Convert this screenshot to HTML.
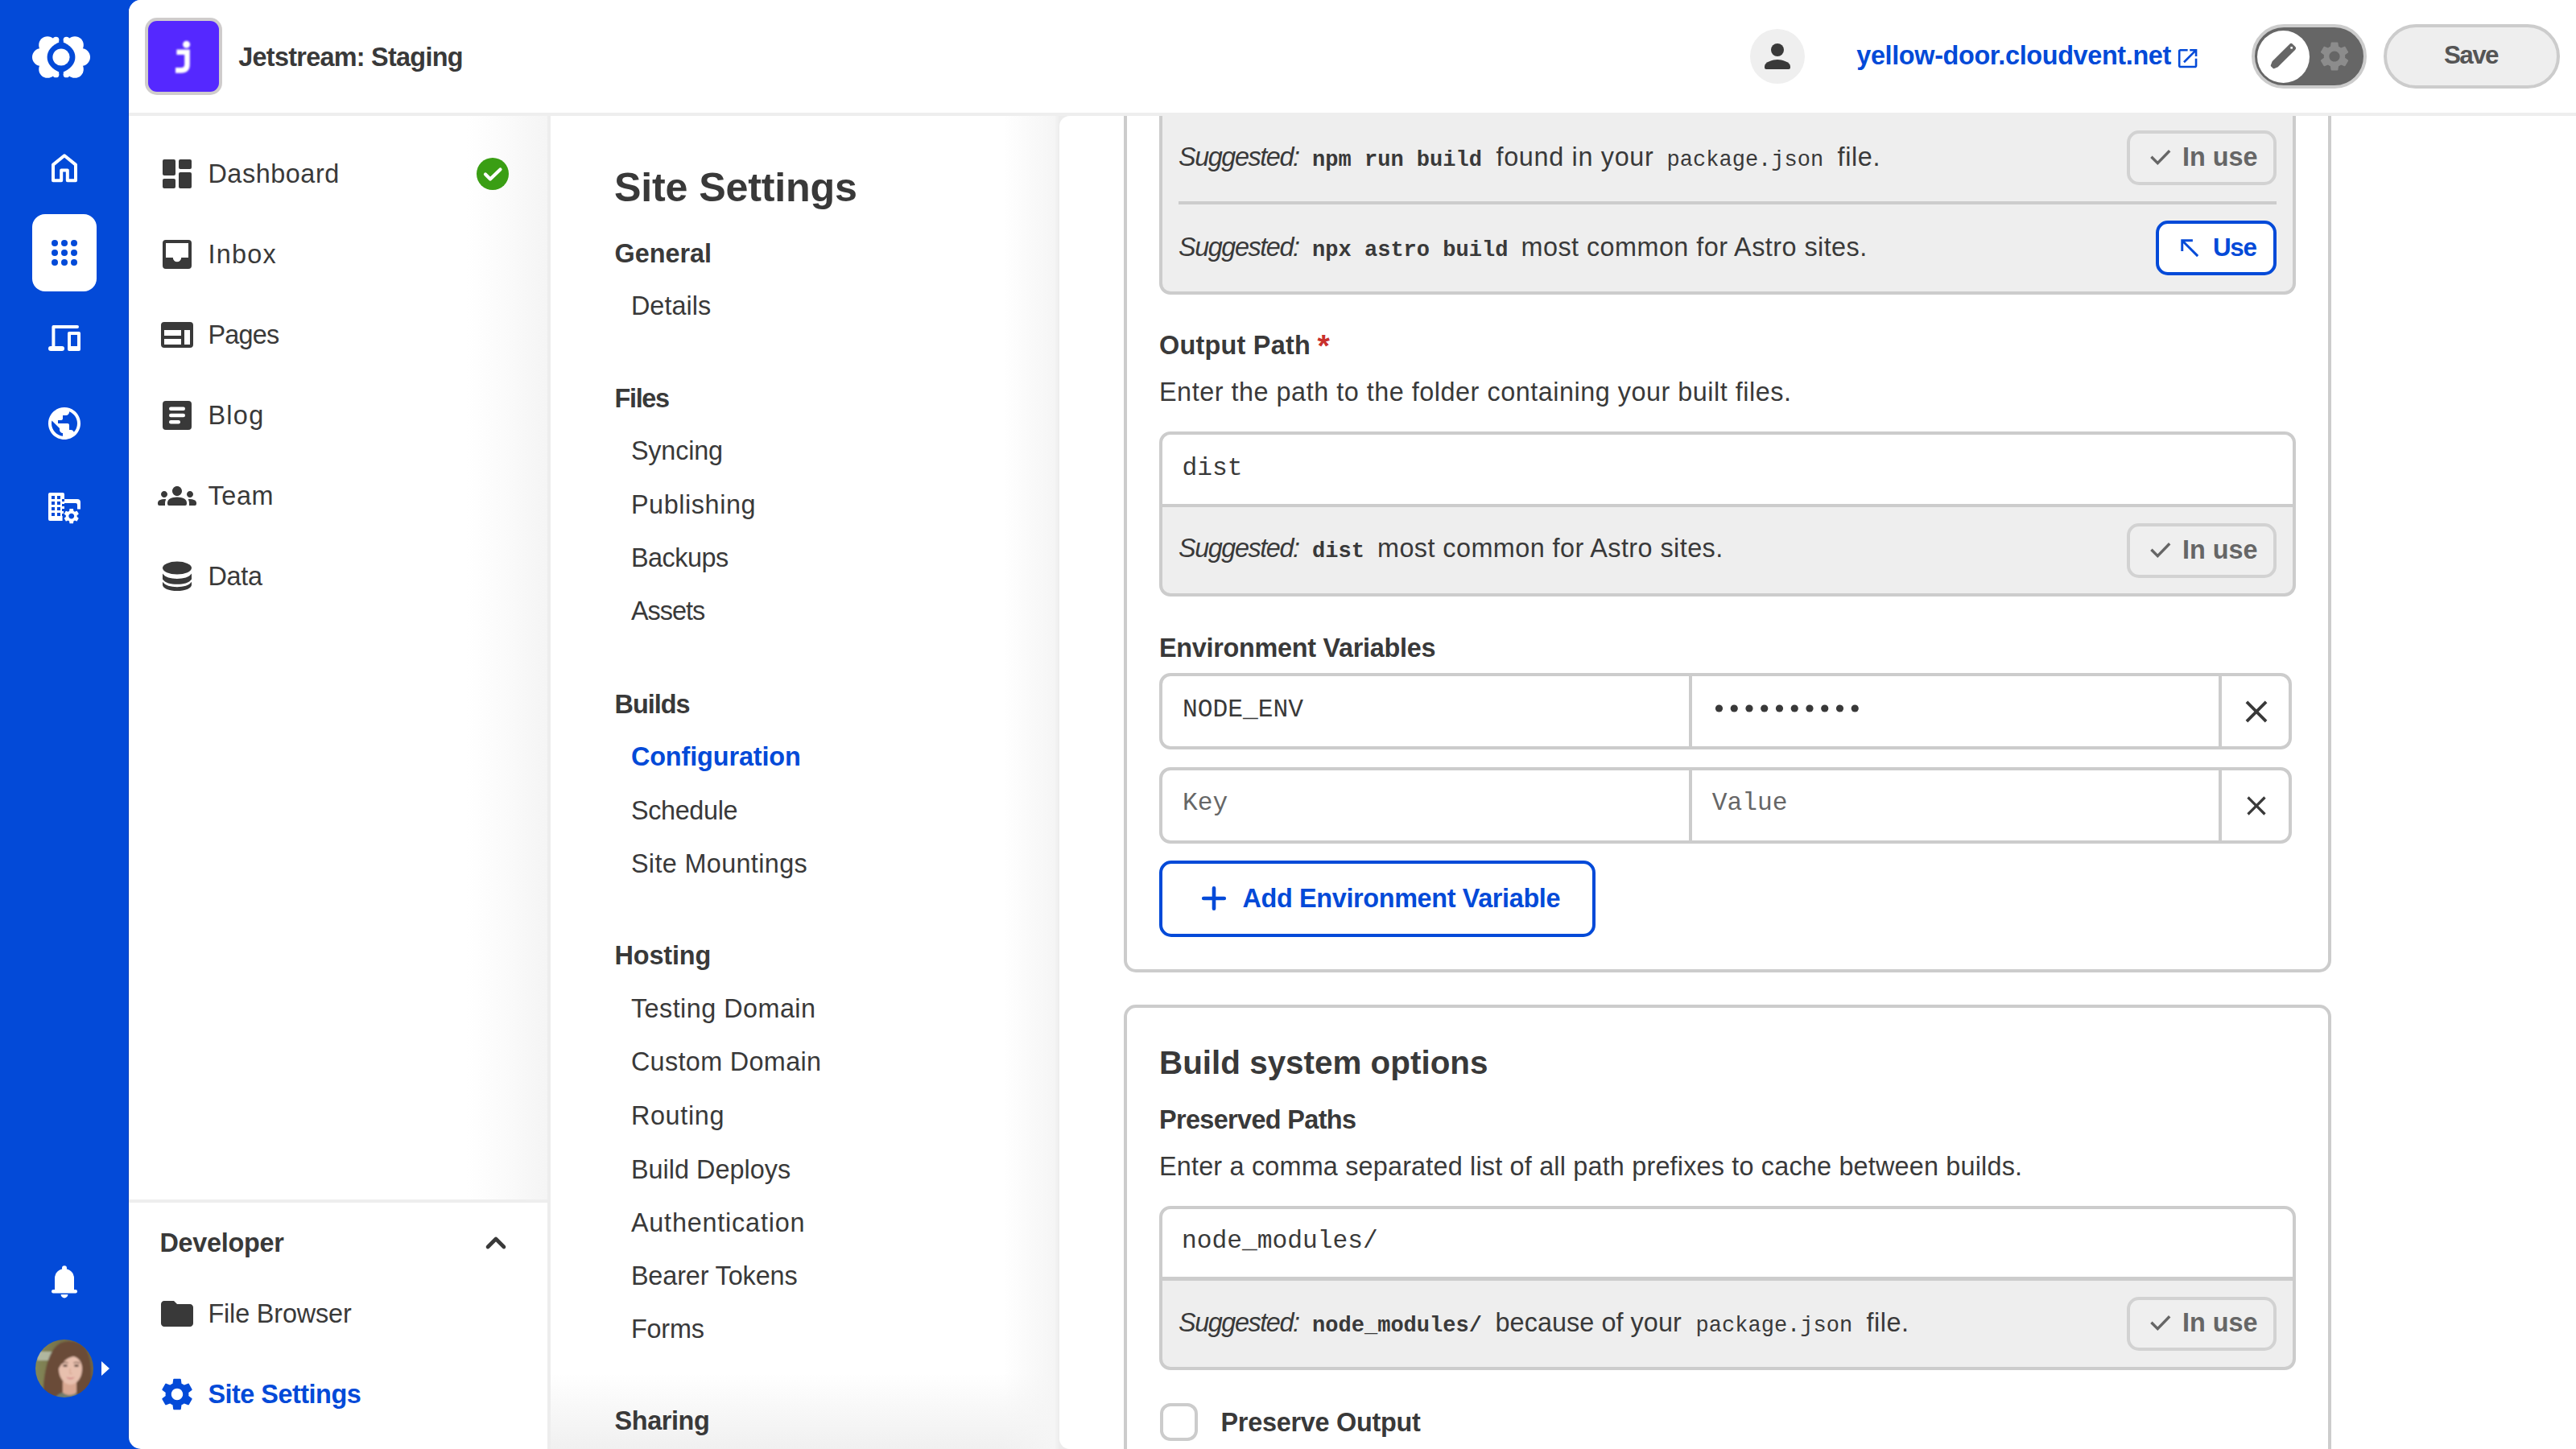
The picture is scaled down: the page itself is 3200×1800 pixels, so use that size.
<!DOCTYPE html>
<html lang="en">
<head>
<meta charset="utf-8">
<title>Jetstream: Staging - Site Settings</title>
<style>
html,body{margin:0;padding:0;}
body{width:3200px;height:1800px;overflow:hidden;background:#034ad8;font-family:"Liberation Sans",sans-serif;color:#393939;position:relative;}
.a{position:absolute;box-sizing:border-box;}
.t{position:absolute;line-height:1;white-space:nowrap;font-family:"Liberation Sans",sans-serif;color:#393939;}
.m{font-family:"Liberation Mono",monospace;}
svg{position:absolute;display:block;overflow:visible;}
/* app shell */
#app{left:160px;top:0;width:3040px;height:1800px;background:#fff;border-radius:15px 0 0 15px;overflow:hidden;}
#hdrline{left:160px;top:140px;width:3040px;height:4px;background:#eeeeee;}
#lnav{left:160px;top:144px;width:520px;height:1346px;background:linear-gradient(to right,#ffffff 0,#ffffff 420px,#fbfbfb 465px,#f6f6f6 505px,#f5f5f5 520px);}
#lnavline{left:680px;top:144px;width:4px;height:1656px;background:#ededed;}
#devline{left:160px;top:1490px;width:520px;height:4px;background:#eeeeee;}
#mid{left:684px;top:144px;width:660px;height:1656px;background:linear-gradient(to right,rgba(255,255,255,0) 0,rgba(255,255,255,0) 562px,rgba(245,245,245,1) 626px,rgba(236,236,236,1) 632px,rgba(236,236,236,1) 660px),linear-gradient(to bottom,#ffffff 0,#ffffff 1562px,#f0f0f0 1656px);}
#content{left:1316px;top:144px;width:1884px;height:1656px;background:#fff;border-radius:13px 0 0 13px;}
.card{border:4px solid #cccccc;border-radius:15px;background:#fff;}
.sbox{border:4px solid #cccccc;border-radius:14px;background:#eeeeee;}
.hl{background:#cccccc;}
.btn{border:4px solid #d2d2d2;border-radius:15px;background:#efefef;}
.btnb{border:4px solid #034ad8;border-radius:15px;background:#fff;}
</style>
</head>
<body>
<!-- shell -->
<div class="a" id="edge" style="left:159px;top:13px;width:1px;height:1774px;background:#063fbb;"></div>
<div class="a" id="app"></div>
<div class="a" id="lnav"></div>
<div class="a" id="mid"></div>
<div class="a" id="lnavline"></div>
<div class="a" id="devline"></div>
<div class="a" id="content"></div>

<!-- cards -->
<div class="a card" style="left:1396px;top:40px;width:1500px;height:1168px;"></div>
<div class="a card" style="left:1396px;top:1248px;width:1500px;height:700px;"></div>

<!-- build command suggestion box (top is cut by header) -->
<div class="a sbox" style="left:1440px;top:20px;width:1412px;height:346px;"></div>
<div class="a hl" style="left:1464px;top:250px;width:1364px;height:4px;"></div>
<div class="a btn" style="left:2642px;top:162px;width:186px;height:68px;"></div>
<div class="a btnb" style="left:2678px;top:274px;width:150px;height:68px;"></div>

<!-- output path input + suggestion -->
<div class="a sbox" style="left:1440px;top:536px;width:1412px;height:205px;"></div>
<div class="a" style="left:1444px;top:540px;width:1404px;height:86px;background:#fff;border-radius:10px 10px 0 0;"></div>
<div class="a hl" style="left:1444px;top:626px;width:1404px;height:4px;"></div>
<div class="a btn" style="left:2642px;top:650px;width:186px;height:68px;"></div>

<!-- env var rows -->
<div class="a sbox" style="left:1440px;top:836px;width:1407px;height:95px;background:#fff;"></div>
<div class="a hl" style="left:2098px;top:840px;width:4px;height:87px;"></div>
<div class="a hl" style="left:2756px;top:840px;width:4px;height:87px;"></div>
<div class="a sbox" style="left:1440px;top:952.5px;width:1407px;height:95px;background:#fff;"></div>
<div class="a hl" style="left:2098px;top:956.5px;width:4px;height:87px;"></div>
<div class="a hl" style="left:2756px;top:956.5px;width:4px;height:87px;"></div>
<div class="a btnb" style="left:1440px;top:1068.5px;width:542px;height:95px;"></div>

<!-- preserved paths input + suggestion -->
<div class="a sbox" style="left:1440px;top:1497.5px;width:1412px;height:204px;"></div>
<div class="a" style="left:1444px;top:1501.5px;width:1404px;height:85px;background:#fff;border-radius:10px 10px 0 0;"></div>
<div class="a hl" style="left:1444px;top:1586px;width:1404px;height:4.5px;"></div>
<div class="a btn" style="left:2642px;top:1610.5px;width:186px;height:67.5px;"></div>
<!-- checkbox -->
<div class="a" style="left:1440.5px;top:1742.5px;width:47px;height:47px;border:4px solid #cccccc;border-radius:13px;background:#fff;"></div>

<!-- header (covers scrolled content) -->
<div class="a" style="left:176px;top:0;width:3024px;height:140px;background:#fff;"></div>
<div class="a" style="left:160px;top:0;width:40px;height:140px;background:#fff;border-radius:15px 0 0 0;"></div>
<div class="a" id="hdrline"></div>
<!-- site icon -->
<div class="a" style="left:180px;top:22px;width:96px;height:96px;border-radius:15px;background:#cfcccc;"></div>
<div class="a" style="left:184px;top:26px;width:88px;height:88px;border-radius:11px;background:#5528ff;"></div>
<svg style="left:184px;top:26px;filter:blur(1px);" width="88" height="88" viewBox="0 0 88 88"><circle cx="47.600" cy="29.300" r="4.500" fill="#fff"/><path d="M35.400 38.700H48.500V54C48.500 59 46 61.400 41 61.400H34" fill="none" stroke="#fff" stroke-width="6.600"/></svg>
<!-- user avatar button -->
<div class="a" style="left:2174px;top:36px;width:68px;height:68px;border-radius:34px;background:#efefef;"></div>
<svg style="left:2184px;top:46px;" width="48" height="48" viewBox="0 0 24 24"><circle cx="12" cy="8" r="4" fill="#393939"/><path d="M4 18.2c0-2.7 5.3-4.2 8-4.2s8 1.5 8 4.2V19a1 1 0 0 1-1 1H5a1 1 0 0 1-1-1z" fill="#393939"/></svg>
<!-- open in new -->
<svg style="left:2701.5px;top:57px;" width="31.25" height="31.25" viewBox="0 0 24 24"><path d="M19 19H5V5h7V3H5c-1.11 0-2 .9-2 2v14c0 1.1.89 2 2 2h14c1.1 0 2-.9 2-2v-7h-2v7zM14 3v2h3.59l-9.83 9.83 1.41 1.41L19 6.41V10h2V3h-7z" fill="#034ad8"/></svg>
<!-- mode toggle -->
<div class="a" style="left:2797px;top:30px;width:143px;height:80px;border-radius:40px;background:#666666;border:4px solid #cccccc;"></div>
<div class="a" style="left:2803.5px;top:37.5px;width:65px;height:65px;border-radius:33px;background:#fff;"></div>
<svg style="left:2814px;top:48px;" width="44" height="44" viewBox="0 0 24 24"><g transform="rotate(45 12 12)"><path d="M9.300 2.900a1.400 1.400 0 0 1 1.400-1.400h2.600a1.400 1.400 0 0 1 1.400 1.400V19.600l-1.100 2.500a.6.600 0 0 1-.5.400h-2.200a.6.600 0 0 1-.5-.4L9.300 19.600z" fill="#666"/><rect x="11.300" y="3.100" width="1.400" height="1.400" fill="#fff" transform="rotate(45 12 3.800)"/></g></svg>
<svg style="left:2878px;top:48px;" width="44" height="44" viewBox="0 0 24 24"><path d="M19.14 12.94c.04-.3.06-.61.06-.94 0-.32-.02-.64-.07-.94l2.03-1.58c.18-.14.23-.41.12-.61l-1.92-3.32c-.12-.22-.37-.29-.59-.22l-2.39.96c-.5-.38-1.03-.7-1.62-.94l-.36-2.54c-.04-.24-.24-.41-.48-.41h-3.84c-.24 0-.43.17-.47.41l-.36 2.54c-.59.24-1.13.57-1.62.94l-2.39-.96c-.22-.08-.47 0-.59.22L2.74 8.87c-.12.21-.08.47.12.61l2.03 1.58c-.05.3-.09.63-.09.94s.02.64.07.94l-2.03 1.58c-.18.14-.23.41-.12.61l1.92 3.32c.12.22.37.29.59.22l2.39-.96c.5.38 1.03.7 1.62.94l.36 2.54c.05.24.24.41.48.41h3.84c.24 0 .44-.17.47-.41l.36-2.54c.59-.24 1.13-.56 1.62-.94l2.39.96c.22.08.47 0 .59-.22l1.92-3.32c.12-.22.07-.47-.12-.61l-2.01-1.58zM12 15.6c-1.98 0-3.6-1.62-3.6-3.6s1.62-3.6 3.6-3.6 3.6 1.62 3.6 3.6-1.62 3.6-3.6 3.6z" fill="#8c8c8c"/></svg>
<!-- save -->
<div class="a" style="left:2960.5px;top:30px;width:219.5px;height:80px;border-radius:40px;background:#eeeeee;border:4px solid #cccccc;"></div>
<!--HEADER-->
<svg style="left:36px;top:31px;" width="80" height="80" viewBox="0 0 80 80">
<g fill="#fff">
<circle cx="23" cy="25" r="10.8"/><circle cx="15" cy="40" r="11"/><circle cx="23" cy="55" r="10.8"/><circle cx="33.5" cy="18.6" r="3.9"/><circle cx="33.5" cy="61.4" r="3.9"/><path d="M20 18 L36 16 L37.4 22 L37.4 58 L36 64 L20 62z"/>
<circle cx="57" cy="25" r="10.8"/><circle cx="65" cy="40" r="11"/><circle cx="57" cy="55" r="10.8"/><circle cx="46.500" cy="18.600" r="3.900"/><circle cx="46.500" cy="61.400" r="3.900"/><path d="M60 18 L44 16 L42.600 22 L42.600 58 L44 64 L60 62z"/>
</g>
<path d="M40 20.500 C28 25 22.600 32 22.600 40 C22.600 48 28 55 40 59.500 C52 55 57.400 48 57.400 40 C57.400 32 52 25 40 20.500z" fill="#034ad8"/>
<circle cx="40" cy="40" r="10.600" fill="#fff"/>
</svg>
<svg style="left:56px;top:184px;" width="48" height="48" viewBox="0 0 24 24"><path d="M5 20.100v-9.800L12 4.600l7 5.700v9.800h-5.100v-6.300h-3.800v6.300z" fill="none" stroke="#fff" stroke-width="2" stroke-linejoin="round"/></svg>
<div class="a" style="left:40px;top:266px;width:80px;height:96px;border-radius:16px;background:#fff;"></div>
<svg style="left:56px;top:290px;" width="48" height="48" viewBox="0 0 24 24"><circle cx="6" cy="6" r="2" fill="#034ad8"/><circle cx="12" cy="6" r="2" fill="#034ad8"/><circle cx="18" cy="6" r="2" fill="#034ad8"/><circle cx="6" cy="12" r="2" fill="#034ad8"/><circle cx="12" cy="12" r="2" fill="#034ad8"/><circle cx="18" cy="12" r="2" fill="#034ad8"/><circle cx="6" cy="18" r="2" fill="#034ad8"/><circle cx="12" cy="18" r="2" fill="#034ad8"/><circle cx="18" cy="18" r="2" fill="#034ad8"/></svg>
<svg style="left:56px;top:396px;" width="48" height="48" viewBox="0 0 24 24"><path d="M5.200 17V5H20" fill="none" stroke="#fff" stroke-width="2" stroke-linecap="round" stroke-linejoin="round"/><rect x="2" y="17" width="10" height="3" rx="1.5" fill="#fff"/><path d="M15 8h6a1 1 0 0 1 1 1v10a1 1 0 0 1-1 1h-6a1 1 0 0 1-1-1V9a1 1 0 0 1 1-1zm1 2v7h4v-7z" fill="#fff" fill-rule="evenodd"/></svg>
<svg style="left:56px;top:502px;" width="48" height="48" viewBox="0 0 24 24"><path d="M12 2C6.48 2 2 6.48 2 12s4.48 10 10 10 10-4.48 10-10S17.52 2 12 2zm-1 17.93c-3.95-.49-7-3.85-7-7.93 0-.62.08-1.21.21-1.79L9 15v1c0 1.1.9 2 2 2v1.93zm6.9-2.54c-.26-.81-1-1.39-1.9-1.39h-1v-3c0-.55-.45-1-1-1H8v-2h2c.55 0 1-.45 1-1V7h2c1.1 0 2-.9 2-2v-.41c2.93 1.19 5 4.06 5 7.41 0 2.08-.8 3.97-2.1 5.39z" fill="#fff"/></svg>
<svg style="left:56px;top:606px;" width="48" height="48" viewBox="0 0 24 24"><path d="M3 3h8a1 1 0 0 1 1 1v3h-1.5v1.5H12V10h-1.5v1.5H12V13h-1.5v1.5h1V16H10.5v1.5h.3V20.5H3a1 1 0 0 1-1-1V4a1 1 0 0 1 1-1zM4 5v2h2V5zm3.5 0v2h2V5zM4 8.5v2h2v-2zm3.5 0v2h2v-2zM4 12v2h2v-2zm3.5 0v2h2v-2zM4 15.5v2h2v-2zm3.5 0v2h2v-2z" fill="#fff" fill-rule="evenodd"/><path d="M12 7h8a2 2 0 0 1 2 2v4.2h-2V10.5a1 1 0 0 0-1-1h-7z" fill="#fff"/><g transform="translate(10.6,11.8) scale(0.48)"><path d="M19.14 12.94c.04-.3.06-.61.06-.94 0-.32-.02-.64-.07-.94l2.03-1.58c.18-.14.23-.41.12-.61l-1.92-3.32c-.12-.22-.37-.29-.59-.22l-2.39.96c-.5-.38-1.03-.7-1.62-.94l-.36-2.54c-.04-.24-.24-.41-.48-.41h-3.84c-.24 0-.43.17-.47.41l-.36 2.54c-.59.24-1.13.57-1.62.94l-2.39-.96c-.22-.08-.47 0-.59.22L2.74 8.87c-.12.21-.08.47.12.61l2.03 1.58c-.05.3-.09.63-.09.94s.02.64.07.94l-2.03 1.58c-.18.14-.23.41-.12.61l1.92 3.32c.12.22.37.29.59.22l2.39-.96c.5.38 1.03.7 1.62.94l.36 2.54c.05.24.24.41.48.41h3.84c.24 0 .44-.17.47-.41l.36-2.54c.59-.24 1.13-.56 1.62-.94l2.39.96c.22.08.47 0 .59-.22l1.92-3.32c.12-.22.07-.47-.12-.61l-2.01-1.58zM12 15.6c-1.98 0-3.6-1.62-3.6-3.6s1.62-3.6 3.6-3.6 3.6 1.62 3.6 3.6-1.62 3.6-3.6 3.6z" fill="#fff"/></g></svg>
<svg style="left:56px;top:1568px;" width="48" height="48" viewBox="0 0 24 24"><circle cx="12" cy="3.6" r="1.5" fill="#fff"/><path d="M6 17v-7a6 6 0 0 1 12 0v7z" fill="#fff"/><rect x="4" y="17" width="16" height="2.2" rx="1.1" fill="#fff"/><path d="M9.8 20h4.4a2.2 2.2 0 0 1-4.4 0z" fill="#fff"/></svg>
<svg style="left:44px;top:1664px;" width="72" height="72" viewBox="0 0 72 72">
<defs><clipPath id="av"><circle cx="36" cy="36" r="36"/></clipPath>
<linearGradient id="avbg" x1="0" y1="0" x2="1" y2="0"><stop offset="0" stop-color="#858a58"/><stop offset="0.450" stop-color="#76704a"/><stop offset="1" stop-color="#6d6243"/></linearGradient>
<filter id="avb" x="-10%" y="-10%" width="120%" height="120%"><feGaussianBlur stdDeviation="0.900"/></filter></defs>
<g clip-path="url(#av)"><g filter="url(#avb)">
<rect x="-4" y="-4" width="80" height="80" fill="url(#avbg)"/>
<rect x="2" y="15" width="22" height="11" fill="#b9c0ad" opacity=".850"/>
<path d="M10 78C8 52 14 14 30 5c10-5 24-4 32 6 8 11 9 40 6 67z" fill="#6b4b39"/>
<path d="M22 78c3-9 9-13 18-13s17 4 21 13z" fill="#6f7b6c"/>
<path d="M34 52h17v14c-5 4-12 4-17 0z" fill="#d9a892"/>
<ellipse cx="43.500" cy="36.500" rx="14.500" ry="19.500" fill="#e8c0ae"/>
<path d="M27 40C25 20 34 9 46 10c10 1 15 10 13 26-2-9-6-14-12-15-9 2-15 8-20 19z" fill="#6b4b39"/>
<ellipse cx="37" cy="32.500" rx="3" ry="1.300" fill="#3e2a22"/><ellipse cx="51" cy="32.500" rx="3" ry="1.300" fill="#3e2a22"/>
<path d="M33 29.500c2.500-1.500 5-1.500 7.500-.5M47.500 29c2.500-1 5-1 7.500.5" stroke="#5a3d30" stroke-width="1.100" fill="none"/>
<path d="M38.500 46.500c3 1.800 7 1.800 10 0-1.500 3.500-8.500 3.500-10 0z" fill="#c9707a"/>
<path d="M43 36v6.500h2.500" stroke="#d3a08c" stroke-width="1" fill="none"/>
</g></g></svg>
<svg style="left:126px;top:1691px;" width="10" height="18" viewBox="0 0 10 18"><path d="M0 0l10 9-10 9z" fill="#fff"/></svg>

<svg style="left:196px;top:192px;" width="48" height="48" viewBox="0 0 24 24"><rect x="3" y="3" width="8" height="10" rx="1" fill="#393939"/><rect x="3" y="15" width="8" height="6" rx="1" fill="#393939"/><rect x="13" y="3" width="8" height="6" rx="1" fill="#393939"/><rect x="13" y="11" width="8" height="10" rx="1" fill="#393939"/></svg>
<svg style="left:196px;top:292px;" width="48" height="48" viewBox="0 0 24 24"><path d="M5 3h14a2 2 0 0 1 2 2v14a2 2 0 0 1-2 2H5a2 2 0 0 1-2-2V5a2 2 0 0 1 2-2zm0 2v9h4.400a2.600 2.600 0 0 0 5.200 0H19V5z" fill="#393939" fill-rule="evenodd"/></svg>
<svg style="left:196px;top:392px;" width="48" height="48" viewBox="0 0 24 24"><path d="M4 4h16a2 2 0 0 1 2 2v12a2 2 0 0 1-2 2H4a2 2 0 0 1-2-2V6a2 2 0 0 1 2-2zm0 5v3.5h10.5V9zm0 5.500V18h10.5v-3.500zM16.500 9v9H20V9z" fill="#393939" fill-rule="evenodd"/></svg>
<svg style="left:196px;top:492px;" width="48" height="48" viewBox="0 0 24 24"><rect x="3" y="3" width="18" height="18" rx="2" fill="#393939"/><rect x="7" y="6.800" width="10" height="2.200" rx="1.100" fill="#fff"/><rect x="7" y="10.900" width="10" height="2.200" rx="1.100" fill="#fff"/><rect x="7" y="15" width="7" height="2.200" rx="1.100" fill="#fff"/></svg>
<svg style="left:196px;top:592px;" width="48" height="48" viewBox="0 0 24 24"><path d="M12 12.750c1.630 0 3.070.39 4.240.9 1.080.48 1.760 1.560 1.760 2.730V17a1 1 0 0 1-1 1H7a1 1 0 0 1-1-1v-.61c0-1.180.68-2.260 1.760-2.730 1.170-.52 2.610-.91 4.240-.91zM4 13c1.100 0 2-.9 2-2s-.9-2-2-2-2 .9-2 2 .9 2 2 2zm1.130 1.100c-.37-.06-.74-.1-1.130-.1-.99 0-1.930.21-2.780.58C.48 14.900 0 15.620 0 16.430V17a1 1 0 0 0 1 1h3.500v-1.610c0-.83.23-1.610.63-2.290zM20 13c1.100 0 2-.9 2-2s-.9-2-2-2-2 .9-2 2 .9 2 2 2zm4 3.430c0-.81-.48-1.530-1.220-1.850-.85-.37-1.790-.58-2.780-.58-.39 0-.76.04-1.130.1.4.68.63 1.460.63 2.290V18H23a1 1 0 0 0 1-1v-.57zM12 6c1.660 0 3 1.340 3 3s-1.340 3-3 3-3-1.340-3-3 1.340-3 3-3z" fill="#393939"/></svg>
<svg style="left:196px;top:692px;" width="48" height="48" viewBox="0 0 24 24"><ellipse cx="12" cy="6.800" rx="9" ry="4" fill="#393939"/><path d="M3 10.300c1.500 2.300 5 3.200 9 3.200s7.500-.9 9-3.200v3.400c-1.500 2.300-5 3.200-9 3.200s-7.500-.9-9-3.200zM3 15.400c1.500 2.300 5 3.200 9 3.200s7.500-.9 9-3.200v1.800c0 2.200-4 3.800-9 3.800s-9-1.600-9-3.800z" fill="#393939"/></svg>
<svg style="left:592px;top:1520px;" width="48" height="48" viewBox="0 0 24 24"><path d="M7 14.500l5-5 5 5" fill="none" stroke="#393939" stroke-width="2.300" stroke-linecap="round" stroke-linejoin="round"/></svg>
<svg style="left:196px;top:1608px;" width="48" height="48" viewBox="0 0 24 24"><path d="M10 4H4c-1.100 0-1.990.9-1.990 2L2 18c0 1.100.9 2 2 2h16c1.100 0 2-.9 2-2V8c0-1.100-.9-2-2-2h-8l-2-2z" fill="#393939"/></svg>
<svg style="left:196px;top:1708px;" width="48" height="48" viewBox="0 0 24 24"><path d="M19.14 12.94c.04-.3.06-.61.06-.94 0-.32-.02-.64-.07-.94l2.03-1.58c.18-.14.23-.41.12-.61l-1.92-3.32c-.12-.22-.37-.29-.59-.22l-2.39.96c-.5-.38-1.03-.7-1.62-.94l-.36-2.54c-.04-.24-.24-.41-.48-.41h-3.84c-.24 0-.43.17-.47.41l-.36 2.54c-.59.24-1.13.57-1.62.94l-2.39-.96c-.22-.08-.47 0-.59.22L2.74 8.87c-.12.21-.08.47.12.61l2.03 1.58c-.05.3-.09.63-.09.94s.02.64.07.94l-2.03 1.58c-.18.14-.23.41-.12.61l1.92 3.32c.12.22.37.29.59.22l2.39-.96c.5.38 1.03.7 1.62.94l.36 2.54c.05.24.24.41.48.41h3.84c.24 0 .44-.17.47-.41l.36-2.54c.59-.24 1.13-.56 1.62-.94l2.39.96c.22.08.47 0 .59-.22l1.92-3.32c.12-.22.07-.47-.12-.61l-2.01-1.58zM12 15.6c-1.98 0-3.6-1.62-3.6-3.6s1.62-3.6 3.6-3.6 3.6 1.62 3.6 3.6-1.62 3.6-3.6 3.6z" fill="#034ad8"/></svg>
<svg style="left:592px;top:196px;" width="40" height="40" viewBox="0 0 40 40"><circle cx="20" cy="20" r="20" fill="#3a9e14"/><path d="M11 20.500l6 6L29.500 14.500" fill="none" stroke="#fff" stroke-width="4.200" stroke-linecap="round" stroke-linejoin="round"/></svg>
<svg style="left:2667px;top:177.500px;" width="32" height="32" viewBox="0 0 32 32"><path d="M5.400 16.700l7.900 7.900 14.900-15.400" fill="none" stroke="#666" stroke-width="3.400" stroke-linejoin="miter"/></svg>
<svg style="left:2667px;top:665.500px;" width="32" height="32" viewBox="0 0 32 32"><path d="M5.400 16.700l7.900 7.900 14.900-15.400" fill="none" stroke="#666" stroke-width="3.400" stroke-linejoin="miter"/></svg>
<svg style="left:2667px;top:1626px;" width="32" height="32" viewBox="0 0 32 32"><path d="M5.400 16.700l7.900 7.900 14.900-15.400" fill="none" stroke="#666" stroke-width="3.400" stroke-linejoin="miter"/></svg>
<svg style="left:2701.600px;top:290px;" width="35" height="35" viewBox="0 0 24 24"><path d="M5 15h2V8.410L18.590 20 20 18.590 8.410 7H15V5H5v10z" fill="#034ad8"/></svg>
<svg style="left:2779.500px;top:861px;" width="46" height="46" viewBox="0 0 24 24"><path d="M19 6.410L17.590 5 12 10.590 6.410 5 5 6.410 10.590 12 5 17.590 6.410 19 12 13.410 17.590 19 19 17.590 13.410 12z" fill="#393939"/></svg>
<svg style="left:2782.500px;top:980.5px;" width="40" height="40" viewBox="0 0 24 24"><path d="M19 6.410L17.590 5 12 10.590 6.410 5 5 6.410 10.590 12 5 17.590 6.410 19 12 13.410 17.590 19 19 17.590 13.410 12z" fill="#393939"/></svg>
<svg style="left:1484px;top:1092px;" width="48" height="48" viewBox="0 0 24 24"><path d="M5.600 12h12.800M12 5.600v12.800" fill="none" stroke="#034ad8" stroke-width="2.300" stroke-linecap="round"/></svg>
<svg style="left:2130px;top:874.500px;" width="190" height="10" viewBox="0 0 190 10"><circle cx="5.5" cy="5" r="4.600" fill="#393939"/><circle cx="24.25" cy="5" r="4.600" fill="#393939"/><circle cx="43.0" cy="5" r="4.600" fill="#393939"/><circle cx="61.75" cy="5" r="4.600" fill="#393939"/><circle cx="80.5" cy="5" r="4.600" fill="#393939"/><circle cx="99.25" cy="5" r="4.600" fill="#393939"/><circle cx="118.0" cy="5" r="4.600" fill="#393939"/><circle cx="136.75" cy="5" r="4.600" fill="#393939"/><circle cx="155.5" cy="5" r="4.600" fill="#393939"/><circle cx="174.25" cy="5" r="4.600" fill="#393939"/></svg>

<div class="t" style="left:296.25px;top:54.57px;font-size:32.4px;font-weight:700;letter-spacing:-0.724px;">Jetstream: Staging</div>
<div class="t" style="left:2306.25px;top:52.57px;font-size:32.4px;font-weight:700;color:#034ad8;letter-spacing:-0.354px;">yellow-door.cloudvent.net</div>
<div class="t" style="left:3036.00px;top:53.42px;font-size:31.4px;font-weight:700;color:#555555;letter-spacing:-1.618px;">Save</div>
<div class="t" style="left:258.40px;top:200.07px;font-size:32.4px;letter-spacing:0.551px;">Dashboard</div>
<div class="t" style="left:258.40px;top:300.07px;font-size:32.4px;letter-spacing:1.265px;">Inbox</div>
<div class="t" style="left:258.40px;top:400.07px;font-size:32.4px;letter-spacing:-0.762px;">Pages</div>
<div class="t" style="left:258.40px;top:500.07px;font-size:32.4px;letter-spacing:1.328px;">Blog</div>
<div class="t" style="left:258.40px;top:600.07px;font-size:32.4px;letter-spacing:0.659px;">Team</div>
<div class="t" style="left:258.40px;top:700.07px;font-size:32.4px;letter-spacing:-0.268px;">Data</div>
<div class="t" style="left:198.40px;top:1528.07px;font-size:32.4px;font-weight:700;letter-spacing:-0.265px;">Developer</div>
<div class="t" style="left:258.40px;top:1616.07px;font-size:32.4px;letter-spacing:-0.145px;">File Browser</div>
<div class="t" style="left:258.40px;top:1716.07px;font-size:32.4px;font-weight:700;color:#034ad8;letter-spacing:-0.489px;">Site Settings</div>
<div class="t" style="left:763.00px;top:207.51px;font-size:50.2px;font-weight:700;letter-spacing:-0.171px;">Site Settings</div>
<div class="t" style="left:763.60px;top:299.07px;font-size:32.4px;font-weight:700;letter-spacing:-0.038px;">General</div>
<div class="t" style="left:783.90px;top:364.07px;font-size:32.4px;letter-spacing:0.048px;">Details</div>
<div class="t" style="left:763.60px;top:478.57px;font-size:32.4px;font-weight:700;letter-spacing:-1.349px;">Files</div>
<div class="t" style="left:783.90px;top:544.07px;font-size:32.4px;letter-spacing:-0.187px;">Syncing</div>
<div class="t" style="left:783.90px;top:610.57px;font-size:32.4px;letter-spacing:0.573px;">Publishing</div>
<div class="t" style="left:783.90px;top:676.57px;font-size:32.4px;letter-spacing:-0.490px;">Backups</div>
<div class="t" style="left:783.90px;top:742.57px;font-size:32.4px;letter-spacing:-0.982px;">Assets</div>
<div class="t" style="left:763.60px;top:858.57px;font-size:32.4px;font-weight:700;letter-spacing:-1.012px;">Builds</div>
<div class="t" style="left:783.90px;top:924.07px;font-size:32.4px;font-weight:700;color:#034ad8;letter-spacing:-0.117px;">Configuration</div>
<div class="t" style="left:783.90px;top:990.57px;font-size:32.4px;letter-spacing:-0.350px;">Schedule</div>
<div class="t" style="left:783.90px;top:1056.57px;font-size:32.4px;letter-spacing:0.349px;">Site Mountings</div>
<div class="t" style="left:763.60px;top:1171.07px;font-size:32.4px;font-weight:700;letter-spacing:-0.144px;">Hosting</div>
<div class="t" style="left:783.90px;top:1236.57px;font-size:32.4px;letter-spacing:0.452px;">Testing Domain</div>
<div class="t" style="left:783.90px;top:1302.57px;font-size:32.4px;letter-spacing:0.326px;">Custom Domain</div>
<div class="t" style="left:783.90px;top:1370.07px;font-size:32.4px;letter-spacing:0.662px;">Routing</div>
<div class="t" style="left:783.90px;top:1436.57px;font-size:32.4px;letter-spacing:0.021px;">Build Deploys</div>
<div class="t" style="left:783.90px;top:1503.07px;font-size:32.4px;letter-spacing:0.794px;">Authentication</div>
<div class="t" style="left:783.90px;top:1569.07px;font-size:32.4px;letter-spacing:-0.129px;">Bearer Tokens</div>
<div class="t" style="left:783.90px;top:1635.07px;font-size:32.4px;letter-spacing:-0.167px;">Forms</div>
<div class="t" style="left:763.60px;top:1749.07px;font-size:32.4px;font-weight:700;letter-spacing:-0.399px;">Sharing</div>
<div class="t" style="left:1464.00px;top:178.57px;font-size:32.4px;font-style:italic;letter-spacing:-1.432px;">Suggested:</div>
<div class="t m" style="left:1630.00px;top:184.86px;font-size:27.05px;font-weight:700;">npm run build</div>
<div class="t" style="left:1858.50px;top:178.57px;font-size:32.4px;letter-spacing:0.668px;">found in your</div>
<div class="t m" style="left:2070.50px;top:184.86px;font-size:27.05px;">package.json</div>
<div class="t" style="left:2282.50px;top:178.57px;font-size:32.4px;letter-spacing:0.649px;">file.</div>
<div class="t" style="left:1464.00px;top:290.57px;font-size:32.4px;font-style:italic;letter-spacing:-1.432px;">Suggested:</div>
<div class="t m" style="left:1630.00px;top:296.86px;font-size:27.05px;font-weight:700;">npx astro build</div>
<div class="t" style="left:1889.50px;top:290.57px;font-size:32.4px;letter-spacing:0.449px;">most common for Astro sites.</div>
<div class="t" style="left:2711.00px;top:178.57px;font-size:32.4px;font-weight:700;color:#666666;letter-spacing:-0.017px;">In use</div>
<div class="t" style="left:2749.00px;top:292.42px;font-size:31.4px;font-weight:700;color:#034ad8;letter-spacing:-1.314px;">Use</div>
<div class="t" style="left:1440.00px;top:412.57px;font-size:32.4px;font-weight:700;letter-spacing:0.247px;">Output Path</div>
<div class="t" style="left:1636.60px;top:410.26px;font-size:39.5px;font-weight:700;color:#c9302c;">*</div>
<div class="t" style="left:1440.00px;top:470.57px;font-size:32.4px;letter-spacing:0.513px;">Enter the path to the folder containing your built files.</div>
<div class="t m" style="left:1468.60px;top:566.04px;font-size:31.25px;">dist</div>
<div class="t" style="left:1464.00px;top:664.57px;font-size:32.4px;font-style:italic;letter-spacing:-1.432px;">Suggested:</div>
<div class="t m" style="left:1630.00px;top:670.86px;font-size:27.05px;font-weight:700;">dist</div>
<div class="t" style="left:1711.00px;top:664.57px;font-size:32.4px;letter-spacing:0.430px;">most common for Astro sites.</div>
<div class="t" style="left:2711.00px;top:666.57px;font-size:32.4px;font-weight:700;color:#666666;letter-spacing:-0.017px;">In use</div>
<div class="t" style="left:1440.00px;top:789.07px;font-size:32.4px;font-weight:700;letter-spacing:-0.286px;">Environment Variables</div>
<div class="t m" style="left:1469.00px;top:866.04px;font-size:31.25px;">NODE_ENV</div>
<div class="t m" style="left:1469.00px;top:982.04px;font-size:31.25px;color:#666666;">Key</div>
<div class="t m" style="left:2126.80px;top:982.04px;font-size:31.25px;color:#666666;">Value</div>
<div class="t" style="left:1543.50px;top:1099.57px;font-size:32.4px;font-weight:700;color:#034ad8;letter-spacing:-0.355px;">Add Environment Variable</div>
<div class="t" style="left:1440.00px;top:1299.80px;font-size:40.4px;font-weight:700;">Build system options</div>
<div class="t" style="left:1440.00px;top:1375.07px;font-size:32.4px;font-weight:700;letter-spacing:-0.633px;">Preserved Paths</div>
<div class="t" style="left:1440.00px;top:1432.57px;font-size:32.4px;letter-spacing:0.183px;">Enter a comma separated list of all path prefixes to cache between builds.</div>
<div class="t m" style="left:1468.00px;top:1526.04px;font-size:31.25px;">node_modules/</div>
<div class="t" style="left:1464.00px;top:1627.07px;font-size:32.4px;font-style:italic;letter-spacing:-1.432px;">Suggested:</div>
<div class="t m" style="left:1630.00px;top:1633.36px;font-size:27.05px;font-weight:700;">node_modules/</div>
<div class="t" style="left:1857.50px;top:1627.07px;font-size:32.4px;letter-spacing:0.057px;">because of your</div>
<div class="t m" style="left:2106.50px;top:1633.36px;font-size:27.05px;">package.json</div>
<div class="t" style="left:2318.50px;top:1627.07px;font-size:32.4px;letter-spacing:0.524px;">file.</div>
<div class="t" style="left:2711.00px;top:1627.07px;font-size:32.4px;font-weight:700;color:#666666;letter-spacing:-0.017px;">In use</div>
<div class="t" style="left:1516.50px;top:1751.07px;font-size:32.4px;font-weight:700;letter-spacing:-0.266px;">Preserve Output</div>
</body>
</html>
